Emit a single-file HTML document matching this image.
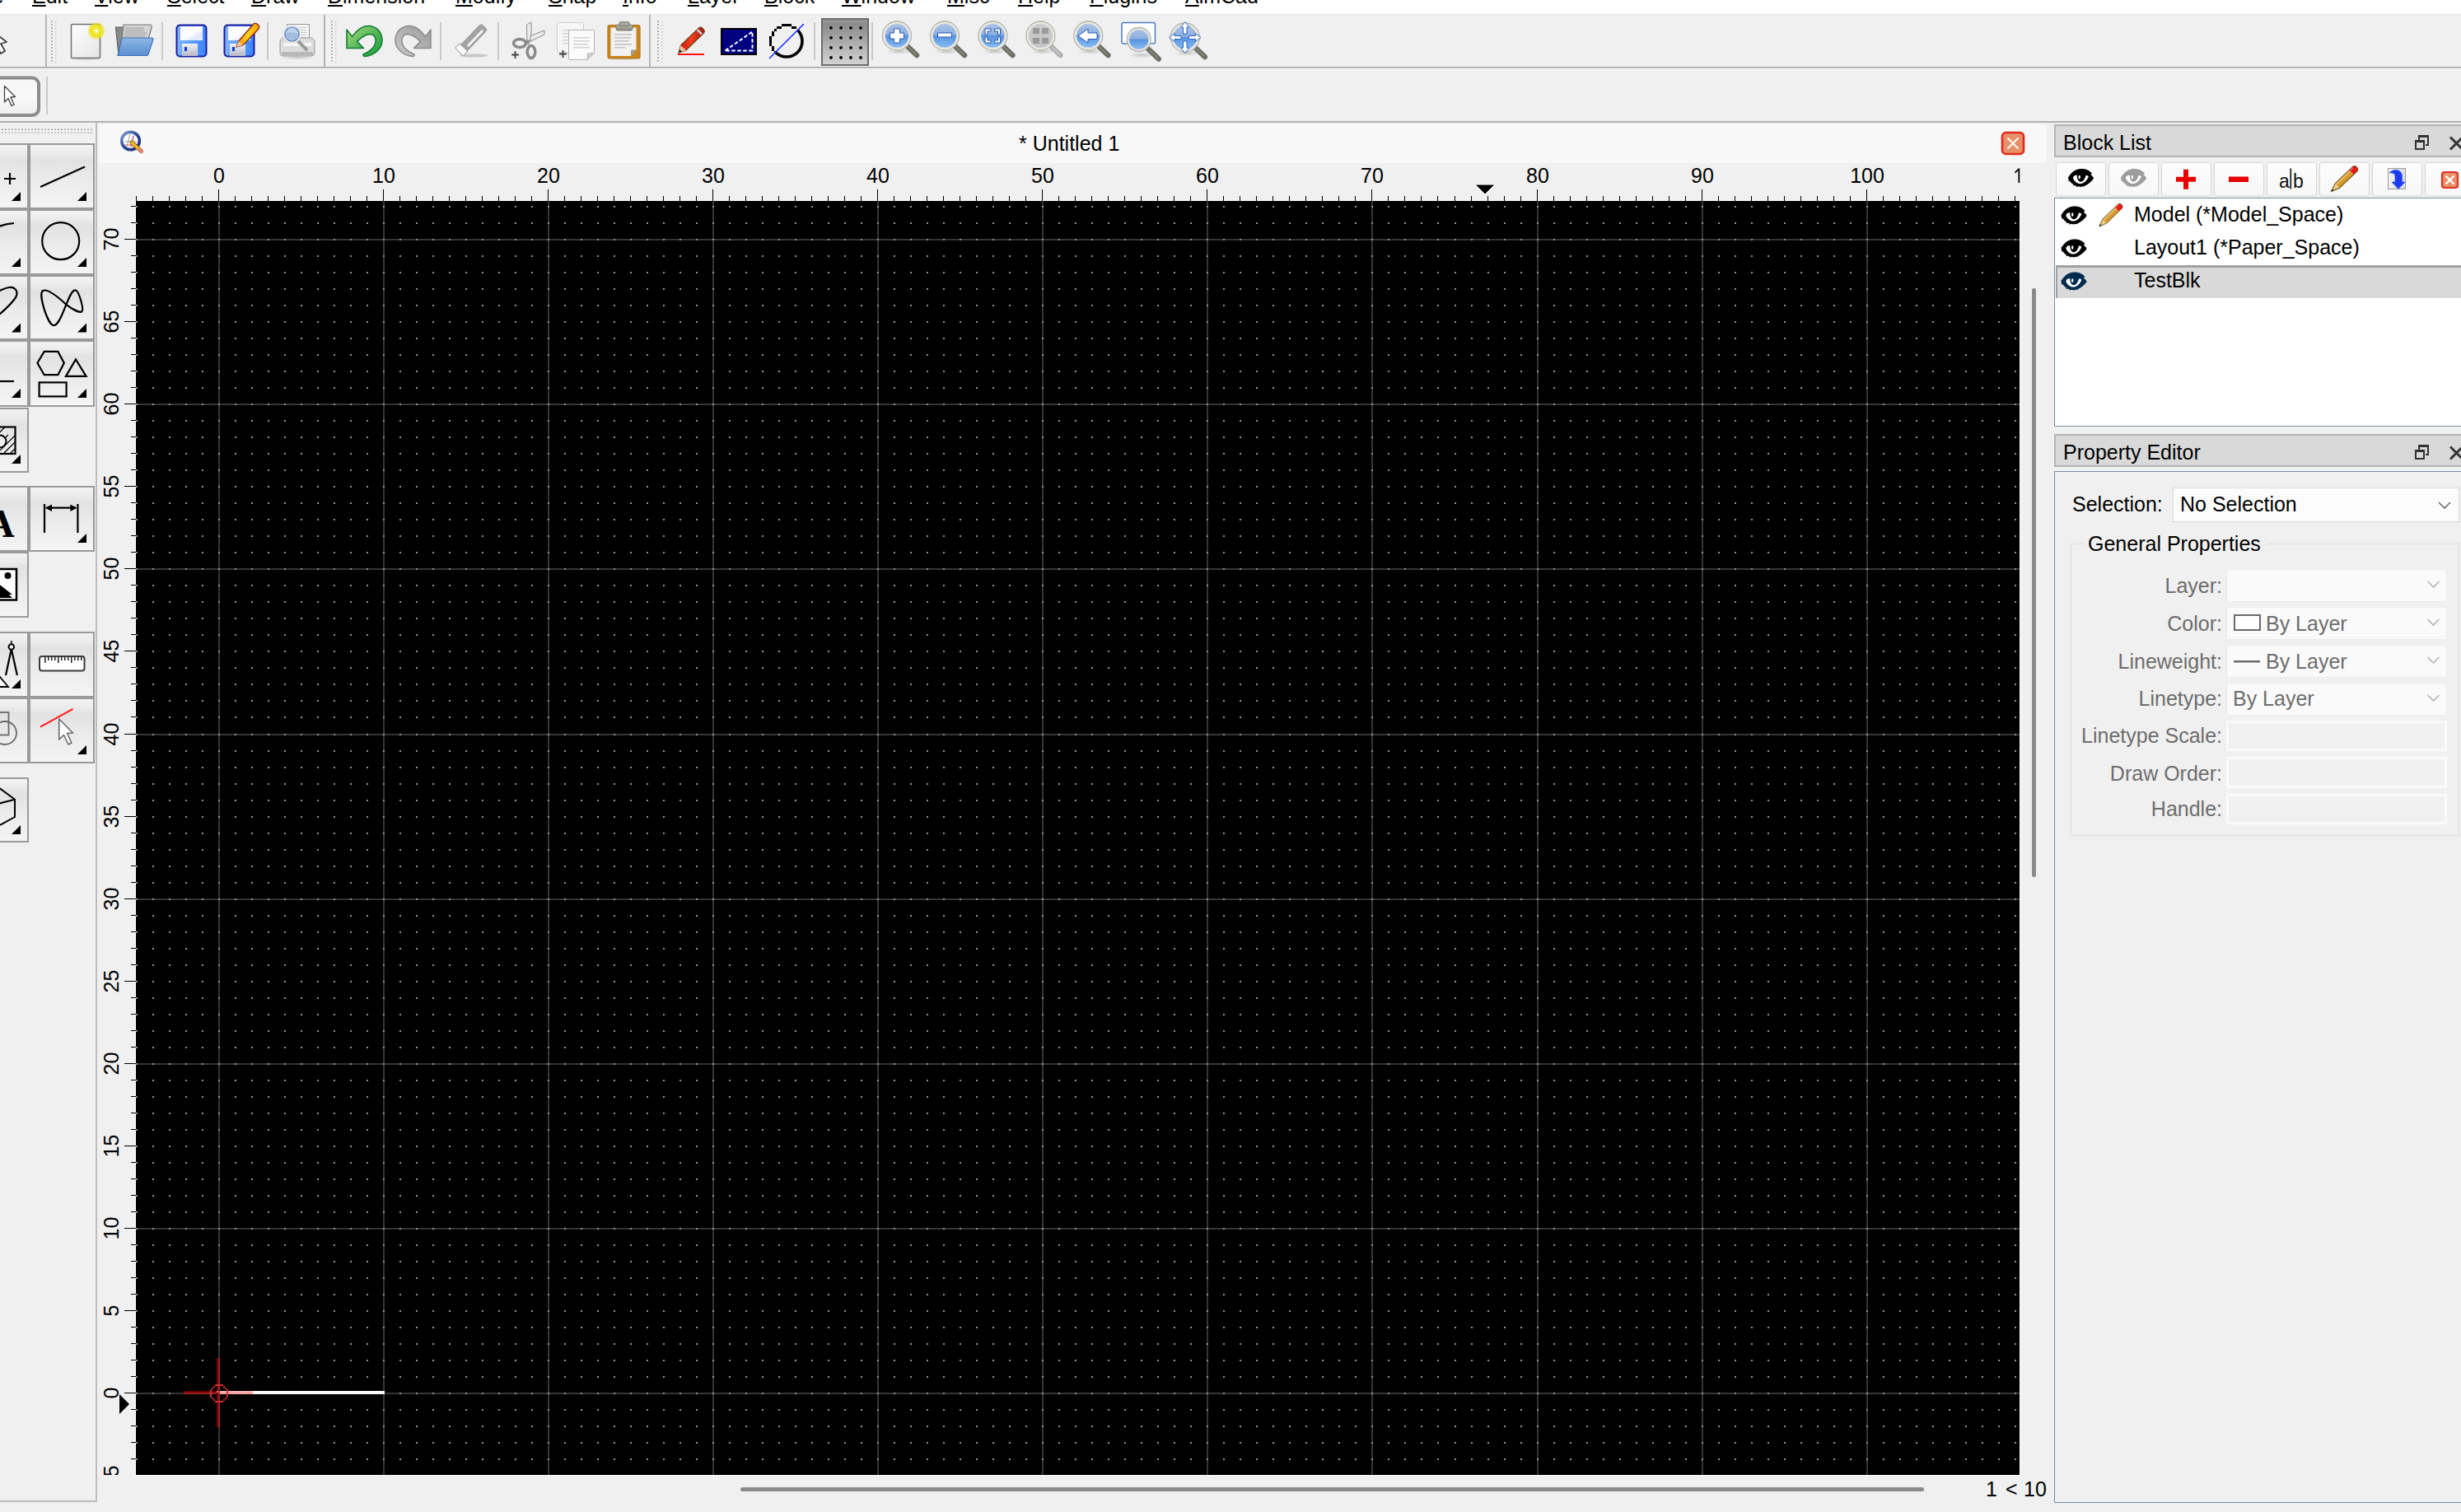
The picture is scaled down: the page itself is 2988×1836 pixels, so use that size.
<!DOCTYPE html>
<html><head><meta charset="utf-8">
<style>
html,body{margin:0;padding:0;}
body{width:2988px;height:1836px;overflow:hidden;position:relative;background:#f0f0f0;
 font-family:"Liberation Sans", sans-serif;font-size:25px;color:#000;}
.a{position:absolute;}
.t{position:absolute;white-space:nowrap;line-height:1;}
.u{text-decoration:underline;text-decoration-thickness:2px;text-underline-offset:1.5px;}
</style></head><body>

<div class="a" style="left:0;top:0;width:2988px;height:17px;background:#fff;"></div>
<div class="a" style="left:0;top:17px;width:2988px;height:1px;background:#e6e6e6;"></div>
<div class="a" style="left:0;top:0;width:2988px;height:17px;overflow:hidden;">
<div class="t" style="left:-36px;top:-17.2px;"><span class="u">F</span>ile</div>
<div class="t" style="left:39px;top:-17.2px;"><span class="u">E</span>dit</div>
<div class="t" style="left:115px;top:-17.2px;"><span class="u">V</span>iew</div>
<div class="t" style="left:203px;top:-17.2px;"><span class="u">S</span>elect</div>
<div class="t" style="left:305px;top:-17.2px;"><span class="u">D</span>raw</div>
<div class="t" style="left:398px;top:-17.2px;"><span class="u">D</span>imension</div>
<div class="t" style="left:553px;top:-17.2px;"><span class="u">M</span>odify</div>
<div class="t" style="left:666px;top:-17.2px;"><span class="u">S</span>nap</div>
<div class="t" style="left:756px;top:-17.2px;"><span class="u">I</span>nfo</div>
<div class="t" style="left:835px;top:-17.2px;"><span class="u">L</span>ayer</div>
<div class="t" style="left:928px;top:-17.2px;"><span class="u">B</span>lock</div>
<div class="t" style="left:1022px;top:-17.2px;"><span class="u">W</span>indow</div>
<div class="t" style="left:1150px;top:-17.2px;"><span class="u">M</span>isc</div>
<div class="t" style="left:1236px;top:-17.2px;"><span class="u">H</span>elp</div>
<div class="t" style="left:1323px;top:-17.2px;"><span class="u">P</span>lugins</div>
<div class="t" style="left:1439px;top:-17.2px;"><span class="u">A</span>lmCad</div>
</div>
<div class="a" style="left:0;top:81px;width:2988px;height:2px;background:#b4b4b4;"></div>
<div class="a" style="left:0;top:83px;width:2988px;height:1px;background:#fafafa;"></div>
<div class="a" style="left:0;top:147px;width:2988px;height:2px;background:#b0b0b0;"></div>
<svg class="a" style="left:0;top:0;" width="1500" height="150"><defs>
<linearGradient id="gPaper" x1="0" y1="0" x2="1" y2="1"><stop offset="0" stop-color="#ffffff"/><stop offset="1" stop-color="#e4e4e4"/></linearGradient>
<radialGradient id="gGlow"><stop offset="0" stop-color="#ffffff"/><stop offset="0.35" stop-color="#f2e92a"/><stop offset="0.7" stop-color="#eee21a" stop-opacity="0.9"/><stop offset="1" stop-color="#eee21a" stop-opacity="0"/></radialGradient>
<linearGradient id="gFold" x1="0" y1="0" x2="0" y2="1"><stop offset="0" stop-color="#8db6e6"/><stop offset="1" stop-color="#5a8fd0"/></linearGradient>
<linearGradient id="gFloppy" x1="0" y1="0" x2="1" y2="0"><stop offset="0" stop-color="#7fb5ff"/><stop offset="0.5" stop-color="#5c9cff"/><stop offset="1" stop-color="#3a86ff"/></linearGradient>
<linearGradient id="gLabel" x1="0" y1="0" x2="1" y2="1"><stop offset="0" stop-color="#f6f8ff"/><stop offset="0.5" stop-color="#ffffff"/><stop offset="0.75" stop-color="#dfe6ff"/><stop offset="1" stop-color="#f0f3ff"/></linearGradient>
<linearGradient id="gShut" x1="0" y1="0" x2="0" y2="1"><stop offset="0" stop-color="#f2f2f2"/><stop offset="1" stop-color="#b8b8c8"/></linearGradient>
<linearGradient id="gGreen" x1="0" y1="0" x2="1" y2="1"><stop offset="0" stop-color="#a8dc80"/><stop offset="0.6" stop-color="#46b050"/><stop offset="1" stop-color="#23a040"/></linearGradient>
<linearGradient id="gGray" x1="0" y1="0" x2="1" y2="1"><stop offset="0" stop-color="#9a9a9a"/><stop offset="1" stop-color="#cacaca"/></linearGradient>
<linearGradient id="gPencil" x1="0" y1="0" x2="1" y2="0"><stop offset="0" stop-color="#f08a10"/><stop offset="0.5" stop-color="#ffd21a"/><stop offset="1" stop-color="#f0a000"/></linearGradient>
<linearGradient id="gRedP" x1="0" y1="0" x2="1" y2="0"><stop offset="0" stop-color="#c81010"/><stop offset="0.5" stop-color="#ee4020"/><stop offset="1" stop-color="#b01010"/></linearGradient>
<linearGradient id="gLens" x1="0" y1="0" x2="0" y2="1"><stop offset="0" stop-color="#a8c0e4"/><stop offset="0.45" stop-color="#8fb0e0"/><stop offset="0.5" stop-color="#5a92e0"/><stop offset="1" stop-color="#86bdf4"/></linearGradient>
<linearGradient id="gLensG" x1="0" y1="0" x2="0" y2="1"><stop offset="0" stop-color="#cccccc"/><stop offset="1" stop-color="#c4c4c4"/></linearGradient>
<linearGradient id="gGrid" x1="0" y1="0" x2="0" y2="1"><stop offset="0" stop-color="#9a9a9a"/><stop offset="0.12" stop-color="#8c8c8c"/><stop offset="1" stop-color="#d4d4d4"/></linearGradient>
<linearGradient id="gBtn" x1="0" y1="0" x2="0" y2="1"><stop offset="0" stop-color="#f6f6f6"/><stop offset="0.5" stop-color="#f8f8f8"/><stop offset="1" stop-color="#eeeeee"/></linearGradient>
<radialGradient id="gShadow"><stop offset="0" stop-color="#000" stop-opacity="0.18"/><stop offset="1" stop-color="#000" stop-opacity="0"/></radialGradient>
<linearGradient id="gClip" x1="0" y1="0" x2="0" y2="1"><stop offset="0" stop-color="#b8b8ac"/><stop offset="1" stop-color="#8a8a80"/></linearGradient>
</defs><rect x="55" y="18" width="2" height="65" fill="#b4b4b4"/><rect x="393" y="18" width="2" height="65" fill="#b4b4b4"/><rect x="788" y="18" width="2" height="65" fill="#b4b4b4"/><rect x="62" y="25" width="2" height="2" fill="#b4b4b4"/><rect x="67" y="26" width="1.5" height="1.5" fill="#c4c4c4"/><rect x="62" y="29" width="2" height="2" fill="#b4b4b4"/><rect x="67" y="30" width="1.5" height="1.5" fill="#c4c4c4"/><rect x="62" y="33" width="2" height="2" fill="#b4b4b4"/><rect x="67" y="34" width="1.5" height="1.5" fill="#c4c4c4"/><rect x="62" y="37" width="2" height="2" fill="#b4b4b4"/><rect x="67" y="38" width="1.5" height="1.5" fill="#c4c4c4"/><rect x="62" y="41" width="2" height="2" fill="#b4b4b4"/><rect x="67" y="42" width="1.5" height="1.5" fill="#c4c4c4"/><rect x="62" y="45" width="2" height="2" fill="#b4b4b4"/><rect x="67" y="46" width="1.5" height="1.5" fill="#c4c4c4"/><rect x="62" y="49" width="2" height="2" fill="#b4b4b4"/><rect x="67" y="50" width="1.5" height="1.5" fill="#c4c4c4"/><rect x="62" y="53" width="2" height="2" fill="#b4b4b4"/><rect x="67" y="54" width="1.5" height="1.5" fill="#c4c4c4"/><rect x="62" y="57" width="2" height="2" fill="#b4b4b4"/><rect x="67" y="58" width="1.5" height="1.5" fill="#c4c4c4"/><rect x="62" y="61" width="2" height="2" fill="#b4b4b4"/><rect x="67" y="62" width="1.5" height="1.5" fill="#c4c4c4"/><rect x="62" y="65" width="2" height="2" fill="#b4b4b4"/><rect x="67" y="66" width="1.5" height="1.5" fill="#c4c4c4"/><rect x="62" y="69" width="2" height="2" fill="#b4b4b4"/><rect x="67" y="70" width="1.5" height="1.5" fill="#c4c4c4"/><rect x="62" y="73" width="2" height="2" fill="#b4b4b4"/><rect x="67" y="74" width="1.5" height="1.5" fill="#c4c4c4"/><rect x="402" y="25" width="2" height="2" fill="#b4b4b4"/><rect x="407" y="26" width="1.5" height="1.5" fill="#c4c4c4"/><rect x="402" y="29" width="2" height="2" fill="#b4b4b4"/><rect x="407" y="30" width="1.5" height="1.5" fill="#c4c4c4"/><rect x="402" y="33" width="2" height="2" fill="#b4b4b4"/><rect x="407" y="34" width="1.5" height="1.5" fill="#c4c4c4"/><rect x="402" y="37" width="2" height="2" fill="#b4b4b4"/><rect x="407" y="38" width="1.5" height="1.5" fill="#c4c4c4"/><rect x="402" y="41" width="2" height="2" fill="#b4b4b4"/><rect x="407" y="42" width="1.5" height="1.5" fill="#c4c4c4"/><rect x="402" y="45" width="2" height="2" fill="#b4b4b4"/><rect x="407" y="46" width="1.5" height="1.5" fill="#c4c4c4"/><rect x="402" y="49" width="2" height="2" fill="#b4b4b4"/><rect x="407" y="50" width="1.5" height="1.5" fill="#c4c4c4"/><rect x="402" y="53" width="2" height="2" fill="#b4b4b4"/><rect x="407" y="54" width="1.5" height="1.5" fill="#c4c4c4"/><rect x="402" y="57" width="2" height="2" fill="#b4b4b4"/><rect x="407" y="58" width="1.5" height="1.5" fill="#c4c4c4"/><rect x="402" y="61" width="2" height="2" fill="#b4b4b4"/><rect x="407" y="62" width="1.5" height="1.5" fill="#c4c4c4"/><rect x="402" y="65" width="2" height="2" fill="#b4b4b4"/><rect x="407" y="66" width="1.5" height="1.5" fill="#c4c4c4"/><rect x="402" y="69" width="2" height="2" fill="#b4b4b4"/><rect x="407" y="70" width="1.5" height="1.5" fill="#c4c4c4"/><rect x="402" y="73" width="2" height="2" fill="#b4b4b4"/><rect x="407" y="74" width="1.5" height="1.5" fill="#c4c4c4"/><rect x="798" y="25" width="2" height="2" fill="#b4b4b4"/><rect x="803" y="26" width="1.5" height="1.5" fill="#c4c4c4"/><rect x="798" y="29" width="2" height="2" fill="#b4b4b4"/><rect x="803" y="30" width="1.5" height="1.5" fill="#c4c4c4"/><rect x="798" y="33" width="2" height="2" fill="#b4b4b4"/><rect x="803" y="34" width="1.5" height="1.5" fill="#c4c4c4"/><rect x="798" y="37" width="2" height="2" fill="#b4b4b4"/><rect x="803" y="38" width="1.5" height="1.5" fill="#c4c4c4"/><rect x="798" y="41" width="2" height="2" fill="#b4b4b4"/><rect x="803" y="42" width="1.5" height="1.5" fill="#c4c4c4"/><rect x="798" y="45" width="2" height="2" fill="#b4b4b4"/><rect x="803" y="46" width="1.5" height="1.5" fill="#c4c4c4"/><rect x="798" y="49" width="2" height="2" fill="#b4b4b4"/><rect x="803" y="50" width="1.5" height="1.5" fill="#c4c4c4"/><rect x="798" y="53" width="2" height="2" fill="#b4b4b4"/><rect x="803" y="54" width="1.5" height="1.5" fill="#c4c4c4"/><rect x="798" y="57" width="2" height="2" fill="#b4b4b4"/><rect x="803" y="58" width="1.5" height="1.5" fill="#c4c4c4"/><rect x="798" y="61" width="2" height="2" fill="#b4b4b4"/><rect x="803" y="62" width="1.5" height="1.5" fill="#c4c4c4"/><rect x="798" y="65" width="2" height="2" fill="#b4b4b4"/><rect x="803" y="66" width="1.5" height="1.5" fill="#c4c4c4"/><rect x="798" y="69" width="2" height="2" fill="#b4b4b4"/><rect x="803" y="70" width="1.5" height="1.5" fill="#c4c4c4"/><rect x="798" y="73" width="2" height="2" fill="#b4b4b4"/><rect x="803" y="74" width="1.5" height="1.5" fill="#c4c4c4"/><rect x="196" y="27" width="2" height="46" fill="#c9c9c9"/><rect x="324" y="27" width="2" height="46" fill="#c9c9c9"/><rect x="534" y="27" width="2" height="46" fill="#c9c9c9"/><rect x="604" y="27" width="2" height="46" fill="#c9c9c9"/><rect x="988" y="27" width="2" height="46" fill="#c9c9c9"/><rect x="1058" y="27" width="2" height="46" fill="#c9c9c9"/><path d="M-14,34 L8,51 L1,53 L6,62 L1,65 L-4,56 L-10,61 Z" fill="#fff" stroke="#3c3c3c" stroke-width="1.8" stroke-linejoin="round"/><ellipse cx="104" cy="71" rx="20" ry="3" fill="url(#gShadow)"/><rect x="86.5" y="29.5" width="35" height="41" rx="1.5" fill="url(#gPaper)" stroke="#6e6e6e" stroke-width="1.5"/><circle cx="117" cy="37.5" r="11" fill="url(#gGlow)"/><path d="M140.5,33 L150,33 L152,67 L144,67 Z" fill="#8a8a8a" stroke="#5c5c5c" stroke-width="1.2"/><path d="M150,30 L182,30 C184,30 184.5,32 184,34 L177,58 L146,64 Z" fill="#d4d4d4" stroke="#7a7a7a" stroke-width="1.2"/><path d="M152,33 L180,33 L176,46 L150,46 Z" fill="#bdbdbd"/><path d="M175,34h5 M174,37h5" stroke="#fff" stroke-width="1"/><path d="M148,46 L185,46 C186,46 186,47 186,48 L180,66 C179.5,67 179,67.5 178,67.5 L143,67.5 Z" fill="url(#gFold)" stroke="#3d70b8" stroke-width="1.2"/><rect x="214.5" y="30.5" width="36" height="38" rx="4" fill="url(#gFloppy)" stroke="#1c1ca0" stroke-width="2"/><rect x="219" y="32" width="27" height="17" fill="url(#gLabel)"/><rect x="221" y="53" width="19" height="15" fill="url(#gShut)"/><rect x="224" y="57" width="3" height="5" fill="#0a3adc"/><rect x="272.5" y="30.5" width="36" height="38" rx="4" fill="url(#gFloppy)" stroke="#1c1ca0" stroke-width="2"/><rect x="277" y="32" width="27" height="17" fill="url(#gLabel)"/><rect x="279" y="53" width="19" height="15" fill="url(#gShut)"/><rect x="282" y="57" width="3" height="5" fill="#0a3adc"/><path d="M287,57 L289.5,50 L308,29 C309,28 311,28 312,29 L314,31 C315,32 315,34 314,35 L295,55 Z" fill="url(#gPencil)" stroke="#8a1a10" stroke-width="1.2"/><path d="M287,57 L289.5,50 L295,55 Z" fill="#e8c8a0"/><ellipse cx="361" cy="70" rx="20" ry="2.5" fill="url(#gShadow)"/><rect x="348.5" y="29.5" width="27" height="22" fill="#f4f4f4" stroke="#9a9a9a" stroke-width="1"/><rect x="357" y="33" width="15" height="1" fill="#c8c8c8"/><rect x="357" y="36" width="15" height="1" fill="#c8c8c8"/><rect x="357" y="39" width="15" height="1" fill="#c8c8c8"/><rect x="357" y="42" width="15" height="1" fill="#c8c8c8"/><rect x="357" y="45" width="15" height="1" fill="#c8c8c8"/><path d="M345,46 L377,46 C380,46 382,48 382,51 L382,64 C382,67 380,68 377,68 L345,68 C342,68 340,67 340,64 L340,51 C340,48 342,46 345,46 Z" fill="#dcdcdc" stroke="#9a9a9a" stroke-width="1"/><rect x="344" y="52" width="34" height="4" fill="#f6f6f6"/><rect x="342" y="63" width="38" height="4" fill="#b8b8b8"/><line x1="361" y1="49" x2="372" y2="60" stroke="#9a9a9a" stroke-width="4" stroke-linecap="round"/><circle cx="354.5" cy="41.5" r="10" fill="#e8f0fa" stroke="#e6e6e6" stroke-width="2.5"/><circle cx="354.5" cy="41.5" r="8.5" fill="#bcd2ec" stroke="#4a7ac0" stroke-width="1.2"/><path d="M347,41 C350,39 358,39 362,42 L362,46 C358,49 350,49 347,46 Z" fill="#a2bde0"/><path d="M421,36 L421,58.5 L441.5,58.5 L433.5,50.4 C440,44 445,41.5 449.7,41.5 C455,41.5 456.5,47 456,51 C455,58 447,64 441,66 C441,68 442,68.5 443,68.5 C455,67 464,59 464,49 C464,38 456,31.5 447,31.5 C440,31.5 433,37 427.5,44.4 Z" fill="url(#gGreen)" stroke="#0d7a30" stroke-width="1.5" stroke-linejoin="round"/><path d="M421,36 L421,58.5 L441.5,58.5 L433.5,50.4 C440,44 445,41.5 449.7,41.5 C455,41.5 456.5,47 456,51 C455,58 447,64 441,66 C441,68 442,68.5 443,68.5 C455,67 464,59 464,49 C464,38 456,31.5 447,31.5 C440,31.5 433,37 427.5,44.4 Z" transform="matrix(-1,0,0,1,944,0)" fill="url(#gGray)" stroke="#8a8a8a" stroke-width="1.5" stroke-linejoin="round"/><ellipse cx="575" cy="67.5" rx="17" ry="2" fill="#c8c8c8"/><path d="M558,56 L582,31 C583.5,29.5 585,29.5 586.5,31 L589.5,34 C591,35.5 591,37 589.5,38.5 L566,63 Z" fill="#a4a4a4" stroke="#8c8c8c" stroke-width="1"/><path d="M567,55 L585,36 L587,38 L569,57 Z" fill="#f4f4f4"/><path d="M552.5,58 L558,53 L568,62 L562.5,68 Z" fill="#fafafa" stroke="#8c8c8c" stroke-width="1"/><path d="M639.5,30 L645,27 L645,50 L640,52 Z" fill="#ececec" stroke="#8a8a8a" stroke-width="1"/><path d="M644,43.5 L661,37 L661,42 L644,50 Z" fill="#ececec" stroke="#8a8a8a" stroke-width="1"/><ellipse cx="631" cy="52.5" rx="7.5" ry="5" fill="none" stroke="#8a8a8a" stroke-width="3.5"/><ellipse cx="645" cy="63" rx="4.8" ry="7.5" fill="none" stroke="#8a8a8a" stroke-width="3.5"/><path d="M637,50 L643,48 L642,55 Z" fill="#8a8a8a"/><path d="M621,66.5 L630,66.5 M625.5,62 L625.5,71" stroke="#404040" stroke-width="1.8"/><rect x="676.5" y="27.5" width="32" height="36" rx="1.5" fill="#f6f6f6" stroke="#cfcfcf" stroke-width="1"/><rect x="683" y="36" width="8" height="1.5" fill="#d4d4d4"/><rect x="683" y="40" width="8" height="1.5" fill="#d4d4d4"/><rect x="683" y="44" width="8" height="1.5" fill="#d4d4d4"/><rect x="683" y="48" width="8" height="1.5" fill="#d4d4d4"/><rect x="683" y="52" width="8" height="1.5" fill="#d4d4d4"/><path d="M690.5,36.5 L720,36.5 C721,36.5 721.5,37 721.5,38 L721.5,64 L713,72.5 L691.5,72.5 C691,72.5 690.5,72 690.5,71.5 Z" fill="#fbfbfb" stroke="#b4b4b4" stroke-width="1"/><path d="M713,72.5 L713,65 L721.5,64 Z" fill="#d0d0d0" stroke="#b4b4b4" stroke-width="0.8"/><rect x="696" y="45" width="20" height="1.5" fill="#d2d2d2"/><rect x="696" y="49" width="20" height="1.5" fill="#d2d2d2"/><rect x="696" y="53" width="18" height="1.5" fill="#d2d2d2"/><rect x="696" y="57" width="20" height="1.5" fill="#d2d2d2"/><path d="M679,65.5 L688,65.5 M683.5,61 L683.5,70" stroke="#404040" stroke-width="1.8"/><ellipse cx="757" cy="71" rx="22" ry="2.5" fill="url(#gShadow)"/><rect x="738" y="30.5" width="39" height="40.5" rx="2.5" fill="#c8861e" stroke="#b0741a" stroke-width="1.2"/><path d="M741.5,33.5 L772.5,33.5 L772.5,60 L766,68 L741.5,68 Z" fill="#f2f2f2"/><path d="M766,68 L766,61 L772.5,60 Z" fill="#9a9a9a"/><rect x="746" y="41" width="21" height="1.6" fill="#c4c4c4"/><rect x="746" y="45" width="20" height="1.6" fill="#c4c4c4"/><rect x="746" y="49" width="18" height="1.6" fill="#c4c4c4"/><rect x="746" y="53" width="21" height="1.6" fill="#c4c4c4"/><rect x="746" y="57" width="13" height="1.6" fill="#c4c4c4"/><rect x="748" y="30" width="20" height="7" rx="2" fill="url(#gClip)" stroke="#707068" stroke-width="0.8"/><rect x="752" y="26.5" width="12" height="5" rx="1.5" fill="#a8a8a0" stroke="#707068" stroke-width="0.8"/><rect x="823" y="65" width="32" height="2" fill="#ff1010"/><path d="M824,64 L826.5,55 L848,34.5 C849.5,33 851.5,33 853,34.5 L854,35.5 C855.5,37 855.5,39 854,40.5 L833,61 Z" fill="url(#gRedP)" stroke="#6a4010" stroke-width="1.2"/><path d="M845.5,37 L851,42.5 L853,40.5 L847.5,35 Z" fill="#c8c8c8"/><path d="M824,64 L826.5,55 L833,61 Z" fill="#f0c0a0"/><path d="M824,64 L825.2,60 L828,62.8 Z" fill="#202020"/><rect x="876" y="35" width="42" height="31" fill="#000080" stroke="#000" stroke-width="2"/><path d="M880.5,61.5 L913.5,38.5 L913.5,61.5 Z" fill="none" stroke="#fff" stroke-width="2" stroke-dasharray="4.5 2.5"/><clipPath id="cpA"><path d="M930,75 L980,25 L980,0 L900,0 L900,75 Z"/></clipPath><clipPath id="cpB"><path d="M930,75 L980,25 L1000,25 L1000,100 L900,100 L900,75 Z"/></clipPath><circle cx="955" cy="50" r="19" fill="none" stroke="#000" stroke-width="3.6" clip-path="url(#cpB)"/><path d="M949,29h12v3h-12Z M943,32h6v3h-6Z M961,32h6v3h-6Z M940,35h3v3h-3Z M937,38h3v6h-3Z M934,44h3v12h-3Z M937,56h3v6h-3Z M940,62h3v2h-3Z" fill="#000" clip-path="url(#cpA)"/><line x1="934" y1="71" x2="976" y2="29" stroke="#1a2cff" stroke-width="1.6"/><rect x="998" y="23" width="56" height="56" fill="url(#gGrid)" stroke="#6c6c6c" stroke-width="2"/><circle cx="1009" cy="33.8" r="1.9" fill="#000"/><circle cx="1021" cy="33.8" r="1.9" fill="#000"/><circle cx="1033" cy="33.8" r="1.9" fill="#000"/><circle cx="1045" cy="33.8" r="1.9" fill="#000"/><circle cx="1009" cy="45.8" r="1.9" fill="#000"/><circle cx="1021" cy="45.8" r="1.9" fill="#000"/><circle cx="1033" cy="45.8" r="1.9" fill="#000"/><circle cx="1045" cy="45.8" r="1.9" fill="#000"/><circle cx="1009" cy="57.9" r="1.9" fill="#000"/><circle cx="1021" cy="57.9" r="1.9" fill="#000"/><circle cx="1033" cy="57.9" r="1.9" fill="#000"/><circle cx="1045" cy="57.9" r="1.9" fill="#000"/><circle cx="1009" cy="70" r="1.9" fill="#000"/><circle cx="1021" cy="70" r="1.9" fill="#000"/><circle cx="1033" cy="70" r="1.9" fill="#000"/><circle cx="1045" cy="70" r="1.9" fill="#000"/><ellipse cx="1092" cy="62.5" rx="16" ry="3.5" fill="url(#gShadow)"/><line x1="1101" y1="55.5" x2="1113" y2="67.0" stroke="#6c6c64" stroke-width="6.5" stroke-linecap="round"/><line x1="1102" y1="56.5" x2="1112" y2="66.0" stroke="#8c8c84" stroke-width="1.6" stroke-linecap="round"/><circle cx="1089" cy="43.5" r="17.5" fill="#ececE6" stroke="#b4b4ac" stroke-width="1.3"/><circle cx="1089" cy="43.5" r="14.5" fill="url(#gLens)" stroke="#c8d4e0" stroke-width="1"/><ellipse cx="1150" cy="62.5" rx="16" ry="3.5" fill="url(#gShadow)"/><line x1="1159" y1="55.5" x2="1171" y2="67.0" stroke="#6c6c64" stroke-width="6.5" stroke-linecap="round"/><line x1="1160" y1="56.5" x2="1170" y2="66.0" stroke="#8c8c84" stroke-width="1.6" stroke-linecap="round"/><circle cx="1147" cy="43.5" r="17.5" fill="#ececE6" stroke="#b4b4ac" stroke-width="1.3"/><circle cx="1147" cy="43.5" r="14.5" fill="url(#gLens)" stroke="#c8d4e0" stroke-width="1"/><ellipse cx="1208.4" cy="62.5" rx="16" ry="3.5" fill="url(#gShadow)"/><line x1="1217.4" y1="55.5" x2="1229.4" y2="67.0" stroke="#6c6c64" stroke-width="6.5" stroke-linecap="round"/><line x1="1218.4" y1="56.5" x2="1228.4" y2="66.0" stroke="#8c8c84" stroke-width="1.6" stroke-linecap="round"/><circle cx="1205.4" cy="43.5" r="17.5" fill="#ececE6" stroke="#b4b4ac" stroke-width="1.3"/><circle cx="1205.4" cy="43.5" r="14.5" fill="url(#gLens)" stroke="#c8d4e0" stroke-width="1"/><ellipse cx="1266.4" cy="62.5" rx="16" ry="3.5" fill="url(#gShadow)"/><line x1="1275.4" y1="55.5" x2="1287.4" y2="67.0" stroke="#b0b0b0" stroke-width="6.5" stroke-linecap="round"/><line x1="1276.4" y1="56.5" x2="1286.4" y2="66.0" stroke="#c8c8c8" stroke-width="1.6" stroke-linecap="round"/><circle cx="1263.4" cy="43.5" r="17.5" fill="#ececE6" stroke="#b4b4ac" stroke-width="1.3"/><circle cx="1263.4" cy="43.5" r="14.5" fill="url(#gLensG)" stroke="#d0d0d0" stroke-width="1"/><ellipse cx="1324.3" cy="62.5" rx="16" ry="3.5" fill="url(#gShadow)"/><line x1="1333.3" y1="55.5" x2="1345.3" y2="67.0" stroke="#6c6c64" stroke-width="6.5" stroke-linecap="round"/><line x1="1334.3" y1="56.5" x2="1344.3" y2="66.0" stroke="#8c8c84" stroke-width="1.6" stroke-linecap="round"/><circle cx="1321.3" cy="43.5" r="17.5" fill="#ececE6" stroke="#b4b4ac" stroke-width="1.3"/><circle cx="1321.3" cy="43.5" r="14.5" fill="url(#gLens)" stroke="#c8d4e0" stroke-width="1"/><path d="M1085.5,35 L1092.5,35 L1092.5,40 L1097.5,40 L1097.5,47 L1092.5,47 L1092.5,52 L1085.5,52 L1085.5,47 L1080.5,47 L1080.5,40 L1085.5,40 Z" fill="#fff" stroke="#2a5cb0" stroke-width="1"/><rect x="1138.5" y="40" width="17" height="5" fill="#fff" stroke="#2a5cb0" stroke-width="1"/><path d="M1196,35 L1203,35 L1203,38 L1199,38 L1199,42 L1196,42 Z" fill="#fff" stroke="#2a5cb0" stroke-width="1"/><path d="M1214.5,35 L1207.5,35 L1207.5,38 L1211.5,38 L1211.5,42 L1214.5,42 Z" fill="#fff" stroke="#2a5cb0" stroke-width="1"/><path d="M1196,52 L1203,52 L1203,49 L1199,49 L1199,45 L1196,45 Z" fill="#fff" stroke="#2a5cb0" stroke-width="1"/><path d="M1214.5,52 L1207.5,52 L1207.5,49 L1211.5,49 L1211.5,45 L1214.5,45 Z" fill="#fff" stroke="#2a5cb0" stroke-width="1"/><rect x="1258.5" y="38.5" width="10" height="10" fill="#c6c6c6"/><path d="M1254,34h8v7h-8Z M1265,34h8v7h-8Z M1254,46h8v7h-8Z M1265,46h8v7h-8Z" fill="#9a9a9a"/><path d="M1309,43.5 L1321,35 L1321,40 L1332,40 L1332,47.5 L1321,47.5 L1321,52 Z" fill="#fff" stroke="#2a5cb0" stroke-width="1"/><rect x="1362" y="27.5" width="40.5" height="25.5" rx="2" fill="#fff" stroke="#4a7cc4" stroke-width="1.5"/><ellipse cx="1385.7" cy="67" rx="16" ry="3.5" fill="url(#gShadow)"/><line x1="1394.7" y1="60" x2="1406.7" y2="71.5" stroke="#6c6c64" stroke-width="6.5" stroke-linecap="round"/><line x1="1395.7" y1="61" x2="1405.7" y2="70.5" stroke="#8c8c84" stroke-width="1.6" stroke-linecap="round"/><circle cx="1382.7" cy="48" r="14.5" fill="#ececE6" stroke="#b4b4ac" stroke-width="1.3"/><circle cx="1382.7" cy="48" r="12" fill="url(#gLens)" stroke="#c8d4e0" stroke-width="1"/><ellipse cx="1441.8" cy="64.5" rx="16" ry="3.5" fill="url(#gShadow)"/><line x1="1450.8" y1="57.5" x2="1462.8" y2="69.0" stroke="#6c6c64" stroke-width="6.5" stroke-linecap="round"/><line x1="1451.8" y1="58.5" x2="1461.8" y2="68.0" stroke="#8c8c84" stroke-width="1.6" stroke-linecap="round"/><circle cx="1438.8" cy="45.5" r="17.5" fill="#ececE6" stroke="#b4b4ac" stroke-width="1.3"/><circle cx="1438.8" cy="45.5" r="14.5" fill="url(#gLens)" stroke="#c8d4e0" stroke-width="1"/><path d="M1438.8,26.5 L1444,33 L1441,33 L1441,41 L1436.5,41 L1436.5,33 L1433.5,33 Z M1438.8,64.5 L1444,58 L1441,58 L1441,50 L1436.5,50 L1436.5,58 L1433.5,58 Z M1419.5,45.5 L1426,40.5 L1426,43.5 L1434,43.5 L1434,47.5 L1426,47.5 L1426,50.5 Z M1458,45.5 L1451.5,40.5 L1451.5,43.5 L1443.5,43.5 L1443.5,47.5 L1451.5,47.5 L1451.5,50.5 Z" fill="#fff" stroke="#2a64c0" stroke-width="1"/><rect x="-20" y="94.5" width="67" height="45.5" rx="8" fill="url(#gBtn)" stroke="#8c8c8c" stroke-width="4"/><path d="M5.5,104.5 L18.5,117.5 L13,118 L17,127 L14,128.5 L10,119.5 L5.5,124 Z" fill="#fff" stroke="#404040" stroke-width="1.3" stroke-linejoin="round"/><rect x="56" y="93" width="2" height="46" fill="#c9c9c9"/></svg>
<div class="a" style="left:116px;top:149px;width:2px;height:1675px;background:#bdbdbd;"></div>
<div class="a" style="left:0;top:1822px;width:118px;height:2px;background:#bdbdbd;"></div>
<div class="a" style="left:-45px;top:174px;width:80px;height:80px;box-sizing:border-box;border:2px solid #9a9a9a;background:linear-gradient(to bottom,#f3f3f3 0%,#ececec 12%,#e2e2e2 24%,#ebebeb 55%,#f4f4f4 100%);"></div>
<div class="a" style="left:35px;top:174px;width:80px;height:80px;box-sizing:border-box;border:2px solid #9a9a9a;background:linear-gradient(to bottom,#f3f3f3 0%,#ececec 12%,#e2e2e2 24%,#ebebeb 55%,#f4f4f4 100%);"></div>
<div class="a" style="left:-45px;top:254px;width:80px;height:79.5px;box-sizing:border-box;border:2px solid #9a9a9a;background:linear-gradient(to bottom,#f3f3f3 0%,#ececec 12%,#e2e2e2 24%,#ebebeb 55%,#f4f4f4 100%);"></div>
<div class="a" style="left:35px;top:254px;width:80px;height:79.5px;box-sizing:border-box;border:2px solid #9a9a9a;background:linear-gradient(to bottom,#f3f3f3 0%,#ececec 12%,#e2e2e2 24%,#ebebeb 55%,#f4f4f4 100%);"></div>
<div class="a" style="left:-45px;top:333.5px;width:80px;height:79.5px;box-sizing:border-box;border:2px solid #9a9a9a;background:linear-gradient(to bottom,#f3f3f3 0%,#ececec 12%,#e2e2e2 24%,#ebebeb 55%,#f4f4f4 100%);"></div>
<div class="a" style="left:35px;top:333.5px;width:80px;height:79.5px;box-sizing:border-box;border:2px solid #9a9a9a;background:linear-gradient(to bottom,#f3f3f3 0%,#ececec 12%,#e2e2e2 24%,#ebebeb 55%,#f4f4f4 100%);"></div>
<div class="a" style="left:-45px;top:413px;width:80px;height:80.5px;box-sizing:border-box;border:2px solid #9a9a9a;background:linear-gradient(to bottom,#f3f3f3 0%,#ececec 12%,#e2e2e2 24%,#ebebeb 55%,#f4f4f4 100%);"></div>
<div class="a" style="left:35px;top:413px;width:80px;height:80.5px;box-sizing:border-box;border:2px solid #9a9a9a;background:linear-gradient(to bottom,#f3f3f3 0%,#ececec 12%,#e2e2e2 24%,#ebebeb 55%,#f4f4f4 100%);"></div>
<div class="a" style="left:-45px;top:495px;width:80px;height:78.5px;box-sizing:border-box;border:2px solid #9a9a9a;background:linear-gradient(to bottom,#f3f3f3 0%,#ececec 12%,#e2e2e2 24%,#ebebeb 55%,#f4f4f4 100%);"></div>
<div class="a" style="left:-45px;top:590px;width:80px;height:79.5px;box-sizing:border-box;border:2px solid #9a9a9a;background:linear-gradient(to bottom,#f3f3f3 0%,#ececec 12%,#e2e2e2 24%,#ebebeb 55%,#f4f4f4 100%);"></div>
<div class="a" style="left:35px;top:590px;width:80px;height:79.5px;box-sizing:border-box;border:2px solid #9a9a9a;background:linear-gradient(to bottom,#f3f3f3 0%,#ececec 12%,#e2e2e2 24%,#ebebeb 55%,#f4f4f4 100%);"></div>
<div class="a" style="left:-45px;top:669.5px;width:80px;height:80.0px;box-sizing:border-box;border:2px solid #9a9a9a;background:linear-gradient(to bottom,#f3f3f3 0%,#ececec 12%,#e2e2e2 24%,#ebebeb 55%,#f4f4f4 100%);"></div>
<div class="a" style="left:-45px;top:767px;width:80px;height:79.5px;box-sizing:border-box;border:2px solid #9a9a9a;background:linear-gradient(to bottom,#f3f3f3 0%,#ececec 12%,#e2e2e2 24%,#ebebeb 55%,#f4f4f4 100%);"></div>
<div class="a" style="left:35px;top:767px;width:80px;height:79.5px;box-sizing:border-box;border:2px solid #9a9a9a;background:linear-gradient(to bottom,#f3f3f3 0%,#ececec 12%,#e2e2e2 24%,#ebebeb 55%,#f4f4f4 100%);"></div>
<div class="a" style="left:-45px;top:846.5px;width:80px;height:80.0px;box-sizing:border-box;border:2px solid #9a9a9a;background:linear-gradient(to bottom,#f3f3f3 0%,#ececec 12%,#e2e2e2 24%,#ebebeb 55%,#f4f4f4 100%);"></div>
<div class="a" style="left:35px;top:846.5px;width:80px;height:80.0px;box-sizing:border-box;border:2px solid #9a9a9a;background:linear-gradient(to bottom,#f3f3f3 0%,#ececec 12%,#e2e2e2 24%,#ebebeb 55%,#f4f4f4 100%);"></div>
<div class="a" style="left:-45px;top:943.5px;width:80px;height:79.5px;box-sizing:border-box;border:2px solid #9a9a9a;background:linear-gradient(to bottom,#f3f3f3 0%,#ececec 12%,#e2e2e2 24%,#ebebeb 55%,#f4f4f4 100%);"></div>
<svg class="a" style="left:0;top:0;" width="118" height="1040"><rect x="2" y="156.5" width="2" height="1.5" fill="#a6a6a6"/><rect x="2" y="160.5" width="2" height="1.5" fill="#b8b8b8"/><rect x="6" y="156.5" width="2" height="1.5" fill="#a6a6a6"/><rect x="6" y="160.5" width="2" height="1.5" fill="#b8b8b8"/><rect x="10" y="156.5" width="2" height="1.5" fill="#a6a6a6"/><rect x="10" y="160.5" width="2" height="1.5" fill="#b8b8b8"/><rect x="14" y="156.5" width="2" height="1.5" fill="#a6a6a6"/><rect x="14" y="160.5" width="2" height="1.5" fill="#b8b8b8"/><rect x="18" y="156.5" width="2" height="1.5" fill="#a6a6a6"/><rect x="18" y="160.5" width="2" height="1.5" fill="#b8b8b8"/><rect x="22" y="156.5" width="2" height="1.5" fill="#a6a6a6"/><rect x="22" y="160.5" width="2" height="1.5" fill="#b8b8b8"/><rect x="26" y="156.5" width="2" height="1.5" fill="#a6a6a6"/><rect x="26" y="160.5" width="2" height="1.5" fill="#b8b8b8"/><rect x="30" y="156.5" width="2" height="1.5" fill="#a6a6a6"/><rect x="30" y="160.5" width="2" height="1.5" fill="#b8b8b8"/><rect x="34" y="156.5" width="2" height="1.5" fill="#a6a6a6"/><rect x="34" y="160.5" width="2" height="1.5" fill="#b8b8b8"/><rect x="38" y="156.5" width="2" height="1.5" fill="#a6a6a6"/><rect x="38" y="160.5" width="2" height="1.5" fill="#b8b8b8"/><rect x="42" y="156.5" width="2" height="1.5" fill="#a6a6a6"/><rect x="42" y="160.5" width="2" height="1.5" fill="#b8b8b8"/><rect x="46" y="156.5" width="2" height="1.5" fill="#a6a6a6"/><rect x="46" y="160.5" width="2" height="1.5" fill="#b8b8b8"/><rect x="50" y="156.5" width="2" height="1.5" fill="#a6a6a6"/><rect x="50" y="160.5" width="2" height="1.5" fill="#b8b8b8"/><rect x="54" y="156.5" width="2" height="1.5" fill="#a6a6a6"/><rect x="54" y="160.5" width="2" height="1.5" fill="#b8b8b8"/><rect x="58" y="156.5" width="2" height="1.5" fill="#a6a6a6"/><rect x="58" y="160.5" width="2" height="1.5" fill="#b8b8b8"/><rect x="62" y="156.5" width="2" height="1.5" fill="#a6a6a6"/><rect x="62" y="160.5" width="2" height="1.5" fill="#b8b8b8"/><rect x="66" y="156.5" width="2" height="1.5" fill="#a6a6a6"/><rect x="66" y="160.5" width="2" height="1.5" fill="#b8b8b8"/><rect x="70" y="156.5" width="2" height="1.5" fill="#a6a6a6"/><rect x="70" y="160.5" width="2" height="1.5" fill="#b8b8b8"/><rect x="74" y="156.5" width="2" height="1.5" fill="#a6a6a6"/><rect x="74" y="160.5" width="2" height="1.5" fill="#b8b8b8"/><rect x="78" y="156.5" width="2" height="1.5" fill="#a6a6a6"/><rect x="78" y="160.5" width="2" height="1.5" fill="#b8b8b8"/><rect x="82" y="156.5" width="2" height="1.5" fill="#a6a6a6"/><rect x="82" y="160.5" width="2" height="1.5" fill="#b8b8b8"/><rect x="86" y="156.5" width="2" height="1.5" fill="#a6a6a6"/><rect x="86" y="160.5" width="2" height="1.5" fill="#b8b8b8"/><rect x="90" y="156.5" width="2" height="1.5" fill="#a6a6a6"/><rect x="90" y="160.5" width="2" height="1.5" fill="#b8b8b8"/><rect x="94" y="156.5" width="2" height="1.5" fill="#a6a6a6"/><rect x="94" y="160.5" width="2" height="1.5" fill="#b8b8b8"/><rect x="98" y="156.5" width="2" height="1.5" fill="#a6a6a6"/><rect x="98" y="160.5" width="2" height="1.5" fill="#b8b8b8"/><rect x="102" y="156.5" width="2" height="1.5" fill="#a6a6a6"/><rect x="102" y="160.5" width="2" height="1.5" fill="#b8b8b8"/><rect x="106" y="156.5" width="2" height="1.5" fill="#a6a6a6"/><rect x="106" y="160.5" width="2" height="1.5" fill="#b8b8b8"/><rect x="110" y="156.5" width="2" height="1.5" fill="#a6a6a6"/><rect x="110" y="160.5" width="2" height="1.5" fill="#b8b8b8"/><path d="M14,244 L25,233 L25,244 Z" fill="#000"/><path d="M94,244 L105,233 L105,244 Z" fill="#000"/><path d="M14,324 L25,313 L25,324 Z" fill="#000"/><path d="M94,324 L105,313 L105,324 Z" fill="#000"/><path d="M14,403.5 L25,392.5 L25,403.5 Z" fill="#000"/><path d="M94,403.5 L105,392.5 L105,403.5 Z" fill="#000"/><path d="M14,483 L25,472 L25,483 Z" fill="#000"/><path d="M94,483 L105,472 L105,483 Z" fill="#000"/><path d="M14,563 L25,552 L25,563 Z" fill="#000"/><path d="M94,659 L105,648 L105,659 Z" fill="#000"/><path d="M14,836 L25,825 L25,836 Z" fill="#000"/><path d="M94,916 L105,905 L105,916 Z" fill="#000"/><path d="M14,1013 L25,1002 L25,1013 Z" fill="#000"/><path d="M5,217 L19,217 M12,210 L12,224" fill="none" stroke="#000" stroke-width="2.2"/><path d="M49,227 L103,202.5" fill="none" stroke="#000" stroke-width="2.2"/><path d="M-40,300 C-20,282 0,272 17,271" fill="none" stroke="#000" stroke-width="2.2"/><circle cx="73.7" cy="292.7" r="22.5" fill="none" stroke="#000" stroke-width="2.2"/><path d="M-8,388 C4,378 17,367 20,359 C22,352 17,348 11,349 C4,350 -3,354 -10,358" fill="none" stroke="#000" stroke-width="2.2"/><path d="M80.4,369.8 C72,362 58,350 52,353 C46,357 58,394 64.7,395 C71,396 76,380 80.4,369.8 C84,361 88,351 92,352.5 C96,354 102,375 99.5,378 C97,381 86,374 80.4,369.8 Z" fill="none" stroke="#000" stroke-width="2.2"/><path d="M-10,463 L17,463" fill="none" stroke="#000" stroke-width="2.2"/><path d="M45.4,440.7 L53.7,426.9 L70.4,426.9 L77.8,440.7 L70.4,455.2 L53.7,455.2 Z" fill="none" stroke="#000" stroke-width="2.2"/><path d="M80,456.9 L92,436.5 L104.6,456.9 Z" fill="none" stroke="#000" stroke-width="2.2"/><rect x="47.6" y="464.4" width="33" height="17" fill="none" stroke="#000" stroke-width="2.2"/><rect x="-14" y="518.5" width="32.5" height="32.5" fill="none" stroke="#000" stroke-width="2.2"/><path d="M-4,551 L18,529 M4,551 L18,537 M12,551 L18,545 M-10,549 L10,528 M-2,518.5 L2,518.5 M6,518.5 L-10,535" fill="none" stroke="#000" stroke-width="1.2"/><circle cx="0" cy="536" r="7.5" fill="#f0f0f0" stroke="#000" stroke-width="2"/><text x="-17" y="652" font-family="Liberation Serif" font-size="48" font-weight="bold">A</text><path d="M54,612 L54,647 M94.4,612 L94.4,647 M56,616.7 L92,616.7" fill="none" stroke="#000" stroke-width="2.2"/><path d="M55,616.7 L63,612.5 L63,621 Z M93.4,616.7 L85.4,612.5 L85.4,621 Z" fill="#000"/><rect x="-20" y="691" width="40" height="37.5" fill="#fff" stroke="#000" stroke-width="2.5"/><path d="M-18,696 L15,722 L-18,722 Z" fill="#000"/><path d="M-18,694 L15,726 L-18,726 Z" fill="#000"/><circle cx="9.5" cy="699" r="4" fill="#000"/><path d="M13.8,788 L7,820 M13.8,788 L20.9,820" fill="none" stroke="#000" stroke-width="2.2"/><circle cx="13.8" cy="785.5" r="3.2" fill="#fff" stroke="#000" stroke-width="2"/><path d="M13.8,778 L13.8,782" stroke="#000" stroke-width="1.5"/><path d="M-12,834 L0,822 L10,834 Z" fill="#fff" stroke="#000" stroke-width="1.8"/><rect x="48" y="797" width="54.5" height="17.5" rx="3" fill="#fff" stroke="#3a3a3a" stroke-width="2"/><rect x="54" y="798" width="1.5" height="7" fill="#222"/><rect x="58" y="798" width="1.5" height="4" fill="#222"/><rect x="62" y="798" width="1.5" height="4" fill="#222"/><rect x="66" y="798" width="1.5" height="4" fill="#222"/><rect x="70" y="798" width="1.5" height="7" fill="#222"/><rect x="74" y="798" width="1.5" height="4" fill="#222"/><rect x="78" y="798" width="1.5" height="4" fill="#222"/><rect x="82" y="798" width="1.5" height="4" fill="#222"/><rect x="86" y="798" width="1.5" height="7" fill="#222"/><rect x="90" y="798" width="1.5" height="4" fill="#222"/><rect x="94" y="798" width="1.5" height="4" fill="#222"/><rect x="98" y="798" width="1.5" height="4" fill="#222"/><rect x="-12" y="865" width="22.5" height="27.5" fill="none" stroke="#6a6a6a" stroke-width="1.8"/><circle cx="6" cy="890" r="14" fill="none" stroke="#6a6a6a" stroke-width="1.8"/><path d="M49,882.6 L88.6,860.8" fill="none" stroke="#ff1a1a" stroke-width="2"/><path d="M71.7,873 L88.5,890 L81.5,890.5 L87,902 L83,904 L77.5,892.5 L71.7,898 Z" fill="#fff" stroke="#6a6a6a" stroke-width="1.6" stroke-linejoin="round"/><path d="M-10,966 L0,957.5 L18,970.7 L18,992 L0,1002 M-10,978 L18,970.7" fill="none" stroke="#000" stroke-width="2"/></svg>
<div class="a" style="left:120px;top:151px;width:2365px;height:47px;background:#f8f8f8;"></div>
<div class="t" style="left:1237px;top:161.8px;">* Untitled 1</div>
<div class="a" style="left:164px;top:243px;width:2289px;height:1549px;background:#fff;"></div>
<svg class="a" style="left:165px;top:244px;" width="2287" height="1547" viewBox="165 244 2287 1547" shape-rendering="crispEdges"><defs><mask id="cm" maskUnits="userSpaceOnUse" x="165" y="244" width="2287" height="1547"><path d="M165,244h2V1791h-2ZM185,244h2V1791h-2ZM205,244h2V1791h-2ZM225,244h2V1791h-2ZM245,244h2V1791h-2ZM265,244h2V1791h-2ZM285,244h2V1791h-2ZM305,244h2V1791h-2ZM325,244h2V1791h-2ZM345,244h2V1791h-2ZM365,244h2V1791h-2ZM385,244h2V1791h-2ZM405,244h2V1791h-2ZM425,244h2V1791h-2ZM445,244h2V1791h-2ZM465,244h2V1791h-2ZM485,244h2V1791h-2ZM505,244h2V1791h-2ZM525,244h2V1791h-2ZM545,244h2V1791h-2ZM565,244h2V1791h-2ZM585,244h2V1791h-2ZM605,244h2V1791h-2ZM625,244h2V1791h-2ZM645,244h2V1791h-2ZM665,244h2V1791h-2ZM685,244h2V1791h-2ZM705,244h2V1791h-2ZM725,244h2V1791h-2ZM745,244h2V1791h-2ZM765,244h2V1791h-2ZM785,244h2V1791h-2ZM805,244h2V1791h-2ZM825,244h2V1791h-2ZM845,244h2V1791h-2ZM865,244h2V1791h-2ZM885,244h2V1791h-2ZM905,244h2V1791h-2ZM925,244h2V1791h-2ZM945,244h2V1791h-2ZM965,244h2V1791h-2ZM985,244h2V1791h-2ZM1005,244h2V1791h-2ZM1025,244h2V1791h-2ZM1045,244h2V1791h-2ZM1065,244h2V1791h-2ZM1085,244h2V1791h-2ZM1105,244h2V1791h-2ZM1125,244h2V1791h-2ZM1145,244h2V1791h-2ZM1165,244h2V1791h-2ZM1185,244h2V1791h-2ZM1205,244h2V1791h-2ZM1225,244h2V1791h-2ZM1245,244h2V1791h-2ZM1265,244h2V1791h-2ZM1285,244h2V1791h-2ZM1305,244h2V1791h-2ZM1325,244h2V1791h-2ZM1345,244h2V1791h-2ZM1365,244h2V1791h-2ZM1385,244h2V1791h-2ZM1405,244h2V1791h-2ZM1425,244h2V1791h-2ZM1445,244h2V1791h-2ZM1465,244h2V1791h-2ZM1485,244h2V1791h-2ZM1505,244h2V1791h-2ZM1525,244h2V1791h-2ZM1545,244h2V1791h-2ZM1565,244h2V1791h-2ZM1585,244h2V1791h-2ZM1605,244h2V1791h-2ZM1625,244h2V1791h-2ZM1645,244h2V1791h-2ZM1665,244h2V1791h-2ZM1685,244h2V1791h-2ZM1705,244h2V1791h-2ZM1725,244h2V1791h-2ZM1745,244h2V1791h-2ZM1766,244h2V1791h-2ZM1786,244h2V1791h-2ZM1806,244h2V1791h-2ZM1826,244h2V1791h-2ZM1846,244h2V1791h-2ZM1866,244h2V1791h-2ZM1886,244h2V1791h-2ZM1906,244h2V1791h-2ZM1926,244h2V1791h-2ZM1946,244h2V1791h-2ZM1966,244h2V1791h-2ZM1986,244h2V1791h-2ZM2006,244h2V1791h-2ZM2026,244h2V1791h-2ZM2046,244h2V1791h-2ZM2066,244h2V1791h-2ZM2086,244h2V1791h-2ZM2106,244h2V1791h-2ZM2126,244h2V1791h-2ZM2146,244h2V1791h-2ZM2166,244h2V1791h-2ZM2186,244h2V1791h-2ZM2206,244h2V1791h-2ZM2226,244h2V1791h-2ZM2246,244h2V1791h-2ZM2266,244h2V1791h-2ZM2286,244h2V1791h-2ZM2306,244h2V1791h-2ZM2326,244h2V1791h-2ZM2346,244h2V1791h-2ZM2366,244h2V1791h-2ZM2386,244h2V1791h-2ZM2406,244h2V1791h-2ZM2426,244h2V1791h-2ZM2446,244h2V1791h-2Z" fill="#fff"/></mask></defs><rect x="165" y="244" width="2287" height="1547" fill="#000"/><path d="M265,244h2V1791h-2ZM465,244h2V1791h-2ZM665,244h2V1791h-2ZM865,244h2V1791h-2ZM1065,244h2V1791h-2ZM1265,244h2V1791h-2ZM1465,244h2V1791h-2ZM1665,244h2V1791h-2ZM1866,244h2V1791h-2ZM2066,244h2V1791h-2ZM2266,244h2V1791h-2ZM165,1691h2287v2h-2287ZM165,1491h2287v2h-2287ZM165,1291h2287v2h-2287ZM165,1091h2287v2h-2287ZM165,891h2287v2h-2287ZM165,690h2287v2h-2287ZM165,490h2287v2h-2287ZM165,290h2287v2h-2287Z" fill="#353535"/><path d="M165,1771h2287v2h-2287ZM165,1751h2287v2h-2287ZM165,1731h2287v2h-2287ZM165,1711h2287v2h-2287ZM165,1691h2287v2h-2287ZM165,1671h2287v2h-2287ZM165,1651h2287v2h-2287ZM165,1631h2287v2h-2287ZM165,1611h2287v2h-2287ZM165,1591h2287v2h-2287ZM165,1571h2287v2h-2287ZM165,1551h2287v2h-2287ZM165,1531h2287v2h-2287ZM165,1511h2287v2h-2287ZM165,1491h2287v2h-2287ZM165,1471h2287v2h-2287ZM165,1451h2287v2h-2287ZM165,1431h2287v2h-2287ZM165,1411h2287v2h-2287ZM165,1391h2287v2h-2287ZM165,1371h2287v2h-2287ZM165,1351h2287v2h-2287ZM165,1331h2287v2h-2287ZM165,1311h2287v2h-2287ZM165,1291h2287v2h-2287ZM165,1271h2287v2h-2287ZM165,1251h2287v2h-2287ZM165,1231h2287v2h-2287ZM165,1211h2287v2h-2287ZM165,1191h2287v2h-2287ZM165,1171h2287v2h-2287ZM165,1151h2287v2h-2287ZM165,1131h2287v2h-2287ZM165,1111h2287v2h-2287ZM165,1091h2287v2h-2287ZM165,1071h2287v2h-2287ZM165,1051h2287v2h-2287ZM165,1031h2287v2h-2287ZM165,1011h2287v2h-2287ZM165,991h2287v2h-2287ZM165,971h2287v2h-2287ZM165,951h2287v2h-2287ZM165,931h2287v2h-2287ZM165,911h2287v2h-2287ZM165,891h2287v2h-2287ZM165,870h2287v2h-2287ZM165,850h2287v2h-2287ZM165,830h2287v2h-2287ZM165,810h2287v2h-2287ZM165,790h2287v2h-2287ZM165,770h2287v2h-2287ZM165,750h2287v2h-2287ZM165,730h2287v2h-2287ZM165,710h2287v2h-2287ZM165,690h2287v2h-2287ZM165,670h2287v2h-2287ZM165,650h2287v2h-2287ZM165,630h2287v2h-2287ZM165,610h2287v2h-2287ZM165,590h2287v2h-2287ZM165,570h2287v2h-2287ZM165,550h2287v2h-2287ZM165,530h2287v2h-2287ZM165,510h2287v2h-2287ZM165,490h2287v2h-2287ZM165,470h2287v2h-2287ZM165,450h2287v2h-2287ZM165,430h2287v2h-2287ZM165,410h2287v2h-2287ZM165,390h2287v2h-2287ZM165,370h2287v2h-2287ZM165,350h2287v2h-2287ZM165,330h2287v2h-2287ZM165,310h2287v2h-2287ZM165,290h2287v2h-2287ZM165,270h2287v2h-2287ZM165,250h2287v2h-2287Z" fill="#949494" mask="url(#cm)"/><rect x="265" y="1689" width="202" height="2" fill="#ffffff"/><rect x="265" y="1691" width="202" height="2" fill="#f2f2f2"/><rect x="265" y="1689" width="42" height="2" fill="#ffb4b4"/><rect x="265" y="1691" width="42" height="2" fill="#ff9c9c"/><rect x="223" y="1689" width="42" height="2" fill="#6e0000"/><rect x="223" y="1691" width="42" height="2" fill="#a02222"/><rect x="263" y="1649" width="2" height="84" fill="#6e0000"/><rect x="265" y="1649" width="2" height="84" fill="#a02222"/><path d="M261,1681h10v2h-10Z M271,1683h2v2h-2Z M273,1685h2v2h-2Z M275,1687h2v10h-2Z M273,1697h2v2h-2Z M271,1699h2v2h-2Z M261,1701h10v2h-10Z M259,1699h2v2h-2Z M257,1697h2v2h-2Z M255,1687h2v10h-2Z M257,1685h2v2h-2Z M259,1683h2v2h-2Z" fill="#cc2e2e"/><rect x="267" y="1689" width="8" height="2" fill="#ffb4b4"/><rect x="263" y="1689" width="2" height="2" fill="#ff7070"/></svg>
<svg class="a" style="left:120px;top:198px;" width="2365" height="46" viewBox="120 198 2365 46" shape-rendering="crispEdges"><path d="M165,238h1v6h-1ZM185,238h1v6h-1ZM205,238h1v6h-1ZM225,238h1v6h-1ZM245,238h1v6h-1ZM265,230h1v14h-1ZM285,238h1v6h-1ZM305,238h1v6h-1ZM325,238h1v6h-1ZM345,238h1v6h-1ZM365,238h1v6h-1ZM385,238h1v6h-1ZM405,238h1v6h-1ZM425,238h1v6h-1ZM445,238h1v6h-1ZM465,230h1v14h-1ZM485,238h1v6h-1ZM505,238h1v6h-1ZM525,238h1v6h-1ZM545,238h1v6h-1ZM565,238h1v6h-1ZM585,238h1v6h-1ZM605,238h1v6h-1ZM625,238h1v6h-1ZM645,238h1v6h-1ZM665,230h1v14h-1ZM685,238h1v6h-1ZM705,238h1v6h-1ZM725,238h1v6h-1ZM745,238h1v6h-1ZM765,238h1v6h-1ZM785,238h1v6h-1ZM805,238h1v6h-1ZM825,238h1v6h-1ZM845,238h1v6h-1ZM865,230h1v14h-1ZM885,238h1v6h-1ZM905,238h1v6h-1ZM925,238h1v6h-1ZM945,238h1v6h-1ZM965,238h1v6h-1ZM985,238h1v6h-1ZM1005,238h1v6h-1ZM1025,238h1v6h-1ZM1045,238h1v6h-1ZM1065,230h1v14h-1ZM1085,238h1v6h-1ZM1105,238h1v6h-1ZM1125,238h1v6h-1ZM1145,238h1v6h-1ZM1165,238h1v6h-1ZM1185,238h1v6h-1ZM1205,238h1v6h-1ZM1225,238h1v6h-1ZM1245,238h1v6h-1ZM1265,230h1v14h-1ZM1285,238h1v6h-1ZM1305,238h1v6h-1ZM1325,238h1v6h-1ZM1345,238h1v6h-1ZM1365,238h1v6h-1ZM1385,238h1v6h-1ZM1405,238h1v6h-1ZM1425,238h1v6h-1ZM1445,238h1v6h-1ZM1465,230h1v14h-1ZM1485,238h1v6h-1ZM1505,238h1v6h-1ZM1525,238h1v6h-1ZM1545,238h1v6h-1ZM1565,238h1v6h-1ZM1585,238h1v6h-1ZM1605,238h1v6h-1ZM1625,238h1v6h-1ZM1645,238h1v6h-1ZM1665,230h1v14h-1ZM1685,238h1v6h-1ZM1705,238h1v6h-1ZM1725,238h1v6h-1ZM1745,238h1v6h-1ZM1766,238h1v6h-1ZM1786,238h1v6h-1ZM1806,238h1v6h-1ZM1826,238h1v6h-1ZM1846,238h1v6h-1ZM1866,230h1v14h-1ZM1886,238h1v6h-1ZM1906,238h1v6h-1ZM1926,238h1v6h-1ZM1946,238h1v6h-1ZM1966,238h1v6h-1ZM1986,238h1v6h-1ZM2006,238h1v6h-1ZM2026,238h1v6h-1ZM2046,238h1v6h-1ZM2066,230h1v14h-1ZM2086,238h1v6h-1ZM2106,238h1v6h-1ZM2126,238h1v6h-1ZM2146,238h1v6h-1ZM2166,238h1v6h-1ZM2186,238h1v6h-1ZM2206,238h1v6h-1ZM2226,238h1v6h-1ZM2246,238h1v6h-1ZM2266,230h1v14h-1ZM2286,238h1v6h-1ZM2306,238h1v6h-1ZM2326,238h1v6h-1ZM2346,238h1v6h-1ZM2366,238h1v6h-1ZM2386,238h1v6h-1ZM2406,238h1v6h-1ZM2426,238h1v6h-1ZM2446,238h1v6h-1Z" fill="#000"/></svg>
<div class="a" style="left:120px;top:198px;width:2332px;height:46px;overflow:hidden;">
<div class="t" style="left:46px;width:200px;text-align:center;top:2.5px;">0</div>
<div class="t" style="left:246px;width:200px;text-align:center;top:2.5px;">10</div>
<div class="t" style="left:446px;width:200px;text-align:center;top:2.5px;">20</div>
<div class="t" style="left:646px;width:200px;text-align:center;top:2.5px;">30</div>
<div class="t" style="left:846px;width:200px;text-align:center;top:2.5px;">40</div>
<div class="t" style="left:1046px;width:200px;text-align:center;top:2.5px;">50</div>
<div class="t" style="left:1246px;width:200px;text-align:center;top:2.5px;">60</div>
<div class="t" style="left:1446px;width:200px;text-align:center;top:2.5px;">70</div>
<div class="t" style="left:1647px;width:200px;text-align:center;top:2.5px;">80</div>
<div class="t" style="left:1847px;width:200px;text-align:center;top:2.5px;">90</div>
<div class="t" style="left:2047px;width:200px;text-align:center;top:2.5px;">100</div>
</div>
<svg class="a" style="left:2440px;top:200px;" width="14" height="26"><path d="M10.4,4.5 L12.2,4.5 L12.2,22 L10.4,22 Z M6,9 L10.6,4.5 L11.2,6.6 L6.6,10.6 Z" fill="#000"/></svg>
<svg class="a" style="left:1789px;top:222px;" width="28" height="16"><polygon points="2,2 26,2 14,14" fill="#000" stroke="#fff" stroke-width="1"/></svg>
<svg class="a" style="left:120px;top:244px;" width="45" height="1547" viewBox="120 244 45 1547" shape-rendering="crispEdges"><path d="M159,1771h6v1h-6ZM159,1751h6v1h-6ZM159,1731h6v1h-6ZM159,1711h6v1h-6ZM151,1691h14v1h-14ZM159,1671h6v1h-6ZM159,1651h6v1h-6ZM159,1631h6v1h-6ZM159,1611h6v1h-6ZM151,1591h14v1h-14ZM159,1571h6v1h-6ZM159,1551h6v1h-6ZM159,1531h6v1h-6ZM159,1511h6v1h-6ZM151,1491h14v1h-14ZM159,1471h6v1h-6ZM159,1451h6v1h-6ZM159,1431h6v1h-6ZM159,1411h6v1h-6ZM151,1391h14v1h-14ZM159,1371h6v1h-6ZM159,1351h6v1h-6ZM159,1331h6v1h-6ZM159,1311h6v1h-6ZM151,1291h14v1h-14ZM159,1271h6v1h-6ZM159,1251h6v1h-6ZM159,1231h6v1h-6ZM159,1211h6v1h-6ZM151,1191h14v1h-14ZM159,1171h6v1h-6ZM159,1151h6v1h-6ZM159,1131h6v1h-6ZM159,1111h6v1h-6ZM151,1091h14v1h-14ZM159,1071h6v1h-6ZM159,1051h6v1h-6ZM159,1031h6v1h-6ZM159,1011h6v1h-6ZM151,991h14v1h-14ZM159,971h6v1h-6ZM159,951h6v1h-6ZM159,931h6v1h-6ZM159,911h6v1h-6ZM151,891h14v1h-14ZM159,870h6v1h-6ZM159,850h6v1h-6ZM159,830h6v1h-6ZM159,810h6v1h-6ZM151,790h14v1h-14ZM159,770h6v1h-6ZM159,750h6v1h-6ZM159,730h6v1h-6ZM159,710h6v1h-6ZM151,690h14v1h-14ZM159,670h6v1h-6ZM159,650h6v1h-6ZM159,630h6v1h-6ZM159,610h6v1h-6ZM151,590h14v1h-14ZM159,570h6v1h-6ZM159,550h6v1h-6ZM159,530h6v1h-6ZM159,510h6v1h-6ZM151,490h14v1h-14ZM159,470h6v1h-6ZM159,450h6v1h-6ZM159,430h6v1h-6ZM159,410h6v1h-6ZM151,390h14v1h-14ZM159,370h6v1h-6ZM159,350h6v1h-6ZM159,330h6v1h-6ZM159,310h6v1h-6ZM151,290h14v1h-14ZM159,270h6v1h-6ZM159,250h6v1h-6Z" fill="#000"/></svg>
<div class="a" style="left:120px;top:244px;width:45px;height:1547px;overflow:hidden;">
<div class="t" style="left:-85.5px;top:1533.5px;width:200px;height:25px;text-align:center;transform:rotate(-90deg);">-5</div>
<div class="t" style="left:-85.5px;top:1435.0px;width:200px;height:25px;text-align:center;transform:rotate(-90deg);">0</div>
<div class="t" style="left:-85.5px;top:1335.0px;width:200px;height:25px;text-align:center;transform:rotate(-90deg);">5</div>
<div class="t" style="left:-85.5px;top:1235.0px;width:200px;height:25px;text-align:center;transform:rotate(-90deg);">10</div>
<div class="t" style="left:-85.5px;top:1135.0px;width:200px;height:25px;text-align:center;transform:rotate(-90deg);">15</div>
<div class="t" style="left:-85.5px;top:1035.0px;width:200px;height:25px;text-align:center;transform:rotate(-90deg);">20</div>
<div class="t" style="left:-85.5px;top:935.0px;width:200px;height:25px;text-align:center;transform:rotate(-90deg);">25</div>
<div class="t" style="left:-85.5px;top:835.0px;width:200px;height:25px;text-align:center;transform:rotate(-90deg);">30</div>
<div class="t" style="left:-85.5px;top:735.0px;width:200px;height:25px;text-align:center;transform:rotate(-90deg);">35</div>
<div class="t" style="left:-85.5px;top:635.0px;width:200px;height:25px;text-align:center;transform:rotate(-90deg);">40</div>
<div class="t" style="left:-85.5px;top:534.0px;width:200px;height:25px;text-align:center;transform:rotate(-90deg);">45</div>
<div class="t" style="left:-85.5px;top:434.0px;width:200px;height:25px;text-align:center;transform:rotate(-90deg);">50</div>
<div class="t" style="left:-85.5px;top:334.0px;width:200px;height:25px;text-align:center;transform:rotate(-90deg);">55</div>
<div class="t" style="left:-85.5px;top:234.0px;width:200px;height:25px;text-align:center;transform:rotate(-90deg);">60</div>
<div class="t" style="left:-85.5px;top:134.0px;width:200px;height:25px;text-align:center;transform:rotate(-90deg);">65</div>
<div class="t" style="left:-85.5px;top:34.0px;width:200px;height:25px;text-align:center;transform:rotate(-90deg);">70</div>
</div>
<svg class="a" style="left:144px;top:1692px;" width="15" height="27"><polygon points="1,1 13,13 1,25" fill="#000"/></svg>
<div class="a" style="left:2467px;top:350px;width:5px;height:715px;background:#8a8a8a;border-radius:3px;"></div>
<div class="a" style="left:899px;top:1806px;width:1437px;height:5px;background:#8a8a8a;border-radius:3px;"></div>
<div class="t" style="left:2411px;top:1796px;">1</div><div class="t" style="left:2435px;top:1796px;">&lt;</div><div class="t" style="left:2457px;top:1796px;">10</div>
<div class="a" style="left:2494px;top:151px;width:500px;height:40px;background:#d9d9d9;border:2px solid #b4b4b4;box-sizing:border-box;"></div>
<div class="t" style="left:2505px;top:160.8px;">Block List</div>
<div class="a" style="left:2494px;top:240px;width:500px;height:278px;background:#fff;border:1px solid #7d8b99;box-sizing:border-box;"></div>
<div class="a" style="left:2496px;top:322px;width:492px;height:40px;background:#d9d9d9;border-top:3px solid #a0a0a0;border-left:2px solid #a0a0a0;box-sizing:border-box;"></div>
<div class="t" style="left:2591px;top:247.8px;">Model (*Model_Space)</div>
<div class="t" style="left:2591px;top:288.2px;">Layout1 (*Paper_Space)</div>
<div class="t" style="left:2591px;top:327.6px;">TestBlk</div>
<div class="a" style="left:2494px;top:527px;width:500px;height:40px;background:#d9d9d9;border:2px solid #b4b4b4;box-sizing:border-box;"></div>
<div class="t" style="left:2505px;top:536.6px;">Property Editor</div>
<div class="a" style="left:2494px;top:572px;width:494px;height:1253px;border:1px solid #7d8b99;border-right:none;box-sizing:border-box;"></div>
<div class="t" style="left:2516px;top:600.3px;">Selection:</div>
<div class="a" style="left:2638px;top:592px;width:348px;height:42px;background:#fcfcfc;border:1px solid #d8d8d8;box-sizing:border-box;"></div>
<div class="t" style="left:2647px;top:600.3px;">No Selection</div>
<div class="a" style="left:2514px;top:660px;width:472px;height:355px;border:1px solid #dcdcdc;box-sizing:border-box;"></div>
<div class="a" style="left:2530px;top:650px;width:222px;height:20px;background:#f0f0f0;"></div>
<div class="t" style="left:2535px;top:647.8px;">General Properties</div>
<div class="t" style="left:2497px;width:201px;text-align:right;top:699.3px;color:#6d6d6d;">Layer:</div>
<div class="a" style="left:2703px;top:691px;width:268px;height:40px;background:#fafafa;border:1px solid #ececec;box-sizing:border-box;"></div>
<div class="t" style="left:2497px;width:201px;text-align:right;top:744.5px;color:#6d6d6d;">Color:</div>
<div class="a" style="left:2703px;top:737px;width:268px;height:40px;background:#fafafa;border:1px solid #ececec;box-sizing:border-box;"></div>
<div class="t" style="left:2497px;width:201px;text-align:right;top:790.5px;color:#6d6d6d;">Lineweight:</div>
<div class="a" style="left:2703px;top:783px;width:268px;height:40px;background:#fafafa;border:1px solid #ececec;box-sizing:border-box;"></div>
<div class="t" style="left:2497px;width:201px;text-align:right;top:836.2px;color:#6d6d6d;">Linetype:</div>
<div class="a" style="left:2703px;top:829px;width:268px;height:40px;background:#fafafa;border:1px solid #ececec;box-sizing:border-box;"></div>
<div class="t" style="left:2497px;width:201px;text-align:right;top:881.4px;color:#6d6d6d;">Linetype Scale:</div>
<div class="a" style="left:2703px;top:875px;width:268px;height:37px;background:#f0f0f0;border:3px solid #fafafa;box-sizing:border-box;"></div>
<div class="t" style="left:2497px;width:201px;text-align:right;top:926.7px;color:#6d6d6d;">Draw Order:</div>
<div class="a" style="left:2703px;top:919px;width:268px;height:38px;background:#f0f0f0;border:3px solid #fafafa;box-sizing:border-box;"></div>
<div class="t" style="left:2497px;width:201px;text-align:right;top:970.2px;color:#6d6d6d;">Handle:</div>
<div class="a" style="left:2703px;top:964px;width:268px;height:37px;background:#f0f0f0;border:3px solid #fafafa;box-sizing:border-box;"></div>
<svg class="a" style="left:2400px;top:140px;" width="588" height="900" viewBox="2400 140 588 900"><defs>
<g id="eye">
<path d="M7,22.6 C9,15 16,10.9 23,10.9 C28,10.9 33,13 35,16.3 L33,17.3 C35,19 37,20.5 37,22.2 C34,26.5 28,31.7 21.4,31.7 C15,31.7 10,28 7,22.6 Z"/>
<path d="M6.5,21 L9,20 M7,25 L9.5,24 M13,31 L14,29.5 M17,32.5 L17.5,30.5 M22,32.5 L22,30.5 M26,32 L25.5,30" stroke-width="1.2"/>
<path d="M12.3,21.4 C13,18.8 15.3,18 17.3,18 C17,22.5 19,26.3 22,26.3 C25.2,26.3 27,22 28,18.5 C30,18.5 31.6,19.2 31.2,20.2 C29,25.3 25,28.6 21.4,28.6 C17,28.6 13.5,25 12.3,21.4 Z" fill="#fff" stroke="none"/>
<ellipse cx="20.2" cy="20.6" rx="1.2" ry="2.4" fill="#fff" stroke="none"/>
</g>
<g id="pencil">
<path d="M0,0 L9,-3.4 L9,3.4 Z" fill="#ecd08a"/>
<rect x="9" y="-3.4" width="21" height="6.8" fill="#d59a2a"/>
<rect x="9" y="-3.4" width="21" height="2.4" fill="#e8c070"/>
<path d="M30,-3.4 L34.5,-3.4 A3.4,3.4 0 0 1 34.5,3.4 L30,3.4 Z" fill="#ee1818"/><path d="M31,-2.6 L34,-2.6" stroke="#ff9a9a" stroke-width="1"/>
<path d="M0,0 L9,-3.4 L34.5,-3.4 A3.4,3.4 0 0 1 34.5,3.4 L9,3.4 Z" fill="none" stroke="#6a4a10" stroke-width="0.9"/>
<path d="M0,0 L2.8,-1 L2.8,1 Z" fill="#222"/>
</g>
<linearGradient id="gBtnD" x1="0" y1="0" x2="0" y2="1"><stop offset="0" stop-color="#fdfdfd"/><stop offset="1" stop-color="#f7f7f7"/></linearGradient>
<linearGradient id="gArrBox" x1="0" y1="0" x2="1" y2="0"><stop offset="0" stop-color="#f4f4f4"/><stop offset="1" stop-color="#dcdcdc"/></linearGradient>
<linearGradient id="gRing" x1="0" y1="0" x2="1" y2="1"><stop offset="0" stop-color="#8aa0d0"/><stop offset="0.5" stop-color="#2a4a9a"/><stop offset="1" stop-color="#1a2a6a"/></linearGradient>
</defs><path d="M2937,165 h11 v11 h-3 M2937,165 v5" fill="none" stroke="#333" stroke-width="2"/><rect x="2936" y="164" width="12" height="3" fill="#333"/><rect x="2933" y="171" width="10" height="10" fill="none" stroke="#333" stroke-width="2"/><rect x="2932" y="170" width="12" height="3" fill="#333"/><path d="M2975,166.5 L2990,181.5 M2990,166.5 L2975,181.5" stroke="#333" stroke-width="3"/><path d="M2937,541 h11 v11 h-3 M2937,541 v5" fill="none" stroke="#333" stroke-width="2"/><rect x="2936" y="540" width="12" height="3" fill="#333"/><rect x="2933" y="547" width="10" height="10" fill="none" stroke="#333" stroke-width="2"/><rect x="2932" y="546" width="12" height="3" fill="#333"/><path d="M2975,542.5 L2990,557.5 M2990,542.5 L2975,557.5" stroke="#333" stroke-width="3"/><rect x="2496.5" y="197.5" width="60" height="40.5" rx="3" fill="url(#gBtnD)" stroke="#d4d4d4" stroke-width="1"/><rect x="2560.5" y="197.5" width="60" height="40.5" rx="3" fill="url(#gBtnD)" stroke="#d4d4d4" stroke-width="1"/><rect x="2624.5" y="197.5" width="60" height="40.5" rx="3" fill="url(#gBtnD)" stroke="#d4d4d4" stroke-width="1"/><rect x="2688.5" y="197.5" width="60" height="40.5" rx="3" fill="url(#gBtnD)" stroke="#d4d4d4" stroke-width="1"/><rect x="2752.5" y="197.5" width="60" height="40.5" rx="3" fill="url(#gBtnD)" stroke="#d4d4d4" stroke-width="1"/><rect x="2816.5" y="197.5" width="60" height="40.5" rx="3" fill="url(#gBtnD)" stroke="#d4d4d4" stroke-width="1"/><rect x="2880.5" y="197.5" width="60" height="40.5" rx="3" fill="url(#gBtnD)" stroke="#d4d4d4" stroke-width="1"/><rect x="2944.5" y="197.5" width="60" height="40.5" rx="3" fill="url(#gBtnD)" stroke="#d4d4d4" stroke-width="1"/><use href="#eye" transform="translate(2504.5,194.5)" fill="#000" stroke="#000"/><use href="#eye" transform="translate(2568.5,194.5)" fill="#9c9c9c" stroke="#9c9c9c"/><path d="M2642,214.8 h24 v6 h-24 Z M2651,205.8 h6 v24 h-6 Z" fill="#e80000"/><rect x="2706" y="214.5" width="24" height="6.5" fill="#e80000"/><text x="2767" y="227.5" font-family="Liberation Sans" font-size="23" fill="#111">a</text><text x="2784" y="227.5" font-family="Liberation Sans" font-size="23" fill="#111">b</text><rect x="2780.5" y="204.5" width="1.6" height="25" fill="#111"/><use href="#pencil" transform="translate(2830.5,232.5) rotate(-43.5) scale(1.13)"/><rect x="2899.5" y="204.5" width="21" height="25" fill="url(#gArrBox)" stroke="#9a9a9a" stroke-width="1"/><path d="M2901,210 C2906,204.5 2915,205 2916.5,213 L2916.5,221 L2920,221 L2912,229.5 L2904,221 L2908,221 L2908,214 C2908,210.5 2905,209.5 2901,210 Z" fill="#1a3cf0" stroke="#3a5af8" stroke-width="0.8"/><rect x="2965" y="209" width="19" height="19" rx="3" fill="#e8906a" stroke="#e03020" stroke-width="2.2"/><path d="M2969.5,213.5 L2979.5,223.5 M2979.5,213.5 L2969.5,223.5" stroke="#fff" stroke-width="2.4"/><use href="#eye" transform="translate(2496,240)" fill="#000" stroke="#000"/><use href="#pencil" transform="translate(2548.8,274.9) rotate(-44)"/><use href="#eye" transform="translate(2496,280)" fill="#000" stroke="#000"/><use href="#eye" transform="translate(2496,320)" fill="#002a4e" stroke="#002a4e"/><path d="M2961,610.0 L2968,617.0 L2975,610.0" fill="none" stroke="#555" stroke-width="1.3"/><path d="M2947.5,706.0 L2954.5,713.0 L2961.5,706.0" fill="none" stroke="#aaa" stroke-width="1.3"/><path d="M2947.5,752.0 L2954.5,759.0 L2961.5,752.0" fill="none" stroke="#aaa" stroke-width="1.3"/><path d="M2947.5,798.0 L2954.5,805.0 L2961.5,798.0" fill="none" stroke="#aaa" stroke-width="1.3"/><path d="M2947.5,844.0 L2954.5,851.0 L2961.5,844.0" fill="none" stroke="#aaa" stroke-width="1.3"/><rect x="2713" y="747" width="31" height="18" fill="#fff" stroke="#6a6a6a" stroke-width="2"/><rect x="2712" y="802" width="32" height="2.5" fill="#6a6a6a"/></svg>
<div class="t" style="left:2751px;top:744.5px;color:#6d6d6d;">By Layer</div>
<div class="t" style="left:2751px;top:790.5px;color:#6d6d6d;">By Layer</div>
<div class="t" style="left:2711px;top:836.2px;color:#6d6d6d;">By Layer</div>
<svg class="a" style="left:140px;top:150px;" width="40" height="45" viewBox="140 150 40 45"><circle cx="158.5" cy="171" r="10.8" fill="#fff" stroke="url(#gRing)" stroke-width="3.6"/><path d="M151,172 L166,172 M158,162 L154,178 M163,163 L159,179" stroke="#888" stroke-width="0.8"/><path d="M152,176 L165,176 M162,165 L158,178" stroke="#e04040" stroke-width="0.8"/><path d="M160,173 L171.5,183.5" stroke="#8a5a10" stroke-width="5" stroke-linecap="round"/><path d="M160,173 L171.5,183.5" stroke="#f4b820" stroke-width="3.2" stroke-linecap="round"/><path d="M169.5,181.5 L172,184" stroke="#f08080" stroke-width="3.4" stroke-linecap="round"/></svg>
<svg class="a" style="left:2428px;top:158px;" width="32" height="32"><rect x="3" y="3" width="26" height="26" rx="4.5" fill="#e8906a" stroke="#e02a1a" stroke-width="2.6"/><path d="M9.5,9.5 L22.5,22.5 M22.5,9.5 L9.5,22.5" stroke="#fff" stroke-width="1.8"/></svg>
</body></html>
